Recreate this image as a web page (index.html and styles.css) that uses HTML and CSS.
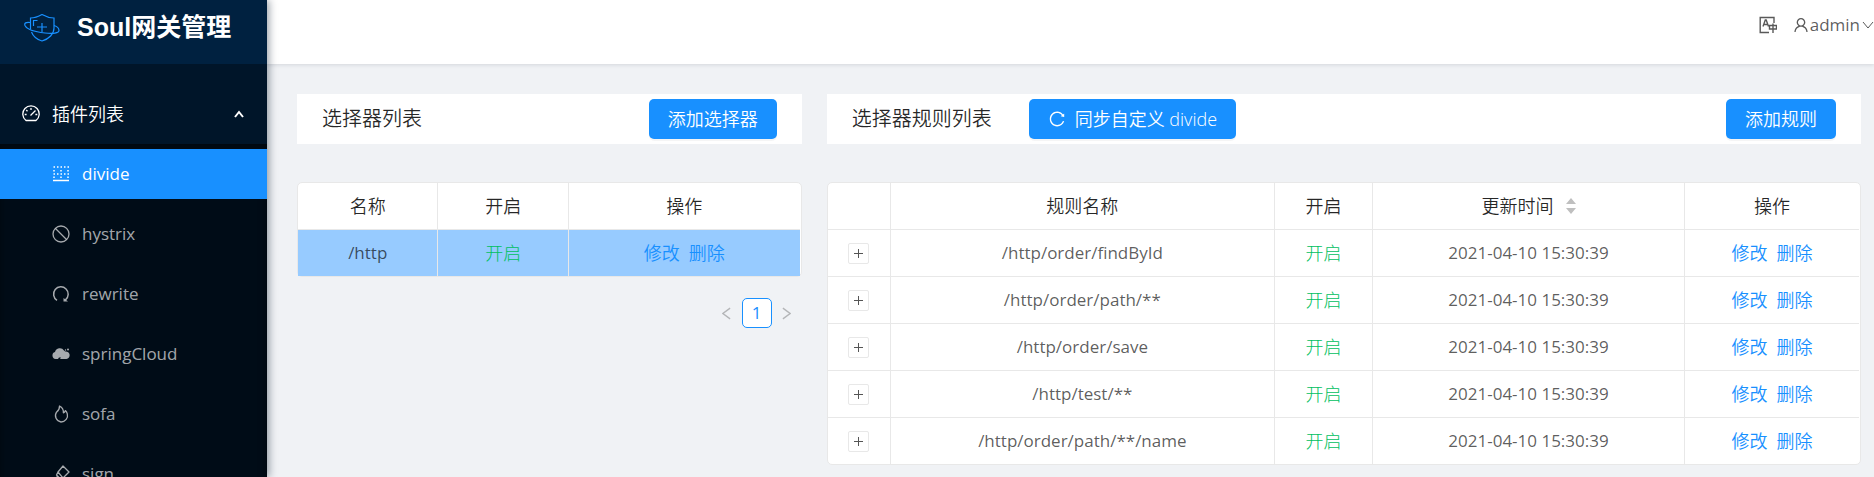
FILE: index.html
```
<!DOCTYPE html>
<html lang="zh-CN">
<head>
  <meta charset="UTF-8" />
  <meta name="viewport" content="width=device-width, initial-scale=1.0"/>
  <title>Soul网关管理</title>
  <link rel="stylesheet" href="styles.css">
</head>
<body>
  <div class="layout">
    <aside class="sidebar">
      <div class="logo">
        <svg class="logo-icon" viewBox="0 0 36 28" fill="none" stroke="#1890ff" stroke-width="1.2">
          <path d="M6.500 15V4c4 0 8-1.500 11.500-3.500C21.500 2.500 26 4 30 4v10c0 6-5 11-12 13-5-1.500-9-5-10.500-9"/>
          <path d="M6 8.500C2 8 0 9 1 11.500c2 4 11 6.500 20 7.500 8 1 14 0 14-2.500 0-2-2-4-5-5"/>
          <path d="M9.500 12V6.500h4M18 9v9M13 13h10"/>
        </svg>
        <h1>Soul网关管理</h1>
      </div>
      <nav class="menu">
        <button class="menu-title" type="button">
          <svg class="icon" viewBox="0 0 18 18" fill="none" stroke="currentColor" stroke-width="1.3">
            <path d="M4 15.500a8.200 8.200 0 1 1 10 0z" stroke-linejoin="round"/>
            <path d="M9 3v2M4.300 5l1.200 1.200M2.700 9.500h1.900M13.400 9.500h1.900M8.500 10.500l5-5"/>
          </svg>
          <span>插件列表</span>
          <svg class="menu-arrow" viewBox="0 0 10 8" fill="none" stroke="currentColor" stroke-width="2">
            <path d="M1 7l4-5 4 5"/>
          </svg>
        </button>
        <ul class="submenu">
          <li><a class="menu-item active" href="#divide">
            <svg class="icon" viewBox="0 0 18 18" fill="none" stroke="currentColor" stroke-width="1.500">
              <path d="M1.500 2h16M1.500 9h16" stroke-dasharray="1.500 2"/>
              <path d="M2 5v1.500M9 5v1.500M16 5v1.500M2 11.500V13M9 11.500V13M16 11.500V13"/>
              <path d="M1 15.500h16"/>
            </svg>divide</a></li>
          <li><a class="menu-item" href="#hystrix">
            <svg class="icon" viewBox="0 0 18 18" fill="none" stroke="currentColor" stroke-width="1.300">
              <circle cx="9" cy="9" r="8"/><path d="M3.500 3.500l11 11"/>
            </svg>hystrix</a></li>
          <li><a class="menu-item" href="#rewrite">
            <svg class="icon" viewBox="0 0 18 18" fill="none" stroke="currentColor" stroke-width="1.500">
              <path d="M5 15.300a7.300 7.300 0 1 1 8.500-.500"/>
              <path d="M11.500 13v3.500h4.500z" fill="currentColor" stroke="none"/>
            </svg>rewrite</a></li>
          <li><a class="menu-item" href="#springCloud">
            <svg class="icon" viewBox="0 0 18 18" fill="currentColor">
              <path d="M3.500 14a3.600 3.600 0 0 1-.500-7 5 5 0 0 1 9-1.500c.800 1 1.500 1 3 1.300A3.700 3.700 0 0 1 14.500 14H8l1-1.500H7L6 14z"/>
              <circle cx="16" cy="4.500" r="1"/><circle cx="13.500" cy="5" r=".7"/>
            </svg>springCloud</a></li>
          <li><a class="menu-item" href="#sofa">
            <svg class="icon" viewBox="0 0 18 18" fill="none" stroke="currentColor" stroke-width="1.300" stroke-linejoin="round">
              <path d="M7.500 1C7.800 4 6.500 5.500 4.500 7.200A6.400 6.400 0 0 0 9 17a6.500 6.500 0 0 0 6.300-8.200c-.4-1.400-1-2.300-2-3.200-.2 1.200-.8 1.900-1.900 2.300C11.600 5 10 2.300 7.500 1z"/>
            </svg>sofa</a></li>
          <li><a class="menu-item" href="#sign">
            <svg class="icon" viewBox="0 0 18 18" fill="none" stroke="currentColor" stroke-width="1.300" stroke-linejoin="round">
              <path d="M11 1l6 6-6 6-5-6zM6 7l-1.500 3L8 13.500l3-.500M5.500 11.500L1 16h5l1.500-2.500"/>
            </svg>sign</a></li>
        </ul>
      </nav>
    </aside>

    <div class="main">
      <header class="topbar">
        <button class="top-button" type="button" aria-label="Language">
          <svg class="icon" viewBox="0 0 18 18" fill="none" stroke="currentColor" stroke-width="1.400">
            <path d="M15 7V1.500H1.200v15H10"/>
            <path d="M4 10.500L6.300 4h.900l2.300 6.500M4.800 8.500h4"/>
            <path d="M10.500 9.500h7v3.500h-7zM14 7.500V17"/>
          </svg>
        </button>
        <button class="top-button user" type="button">
          <svg class="icon" viewBox="0 0 1024 1024" fill="currentColor">
            <path d="M858.500 763.600a374 374 0 00-80.600-119.500 375.630 375.630 0 00-119.500-80.600c-.4-.2-.8-.3-1.200-.5C719.500 518 760 444.700 760 362c0-137-111-248-248-248S264 225 264 362c0 82.700 40.500 156 102.800 201.100-.4.2-.8.3-1.200.5-44.800 18.900-85 46-119.500 80.600a375.630 375.630 0 00-80.600 119.500A371.700 371.700 0 00136 901.800a8 8 0 008 8.200h60c4.400 0 7.900-3.500 8-7.800 2-77.200 33-149.500 87.800-204.300 56.700-56.700 132-87.900 212.200-87.900s155.500 31.200 212.200 87.900C779 752.700 810 825 812 902.200c.1 4.400 3.600 7.800 8 7.800h60a8 8 0 008-8.200c-1-47.800-10.900-94.300-29.500-138.200zM512 534c-45.900 0-89.100-17.900-121.600-50.400S340 407.900 340 362c0-45.900 17.900-89.100 50.400-121.600S466.100 190 512 190s89.100 17.900 121.600 50.400S684 316.100 684 362c0 45.900-17.900 89.100-50.400 121.600S557.900 534 512 534z"/>
          </svg>
          <span>admin</span>
          <svg class="down-arrow" viewBox="0 0 12 8" fill="none" stroke="currentColor">
            <path d="M1 1l5 6 5-6"/>
          </svg>
        </button>
      </header>

      <div class="content">
        <section class="column">
          <div class="panel-header">
            <h2>选择器列表</h2>
            <button class="primary push" type="button">添加选择器</button>
          </div>
          <div class="table-box">
            <table class="selector-table">
              <colgroup><col class="col-name"><col class="col-open"><col></colgroup>
              <thead>
                <tr><th>名称</th><th>开启</th><th>操作</th></tr>
              </thead>
              <tbody>
                <tr class="selected">
                  <td>/http</td>
                  <td class="open">开启</td>
                  <td class="actions"><a href="#edit">修改</a><a href="#delete">删除</a></td>
                </tr>
              </tbody>
            </table>
          </div>
          <div class="pagination">
            <button class="page-step" type="button" aria-label="上一页" disabled>
              <svg viewBox="0 0 10 14" fill="none" stroke="currentColor" stroke-width="1.500"><path d="M9 1L1 7l8 6"/></svg>
            </button>
            <button class="page-number" type="button">1</button>
            <button class="page-step" type="button" aria-label="下一页" disabled>
              <svg viewBox="0 0 10 14" fill="none" stroke="currentColor" stroke-width="1.500"><path d="M1 1l8 6-8 6"/></svg>
            </button>
          </div>
        </section>

        <section class="column">
          <div class="panel-header">
            <h2>选择器规则列表</h2>
            <button class="primary sync" type="button">
              <svg class="icon" viewBox="0 0 1024 1024" fill="currentColor">
                <path d="M909.100 209.300l-56.400 44.100C775.800 155.100 656.200 92 521.900 92 290 92 102.300 279.500 102 511.500 101.700 743.700 289.800 932 521.900 932c181.300 0 335.800-115 394.600-276.100 1.500-4.200-.7-8.900-4.900-10.300l-56.700-19.500a8 8 0 00-10.100 4.800c-1.800 5-3.800 10-5.900 14.900-17.300 41-42.100 77.800-73.700 109.400A344.770 344.770 0 01655.900 829c-42.300 17.900-87.400 27-133.800 27-46.500 0-91.500-9.100-133.800-27A341.500 341.500 0 01279 755.200a342.160 342.160 0 01-73.700-109.400c-17.900-42.400-27-87.400-27-133.900s9.100-91.500 27-133.900c17.300-41 42.100-77.800 73.700-109.400 31.600-31.600 68.400-56.400 109.300-73.800 42.300-17.900 87.400-27 133.800-27 46.500 0 91.500 9.100 133.800 27a341.500 341.500 0 01109.300 73.800c9.900 9.900 19.200 20.400 27.800 31.400l-60.200 47a8 8 0 003 14.100l175.600 43c5 1.200 9.900-2.600 9.900-7.700l.8-180.900c-.1-6.600-7.800-10.300-13-6.200z"/>
              </svg>
              <span>同步自定义 divide</span>
            </button>
            <button class="primary push" type="button">添加规则</button>
          </div>
          <div class="table-box">
            <table class="rule-table">
              <colgroup><col class="col-expand"><col><col class="col-state"><col class="col-time"><col class="col-action"></colgroup>
              <thead>
                <tr>
                  <th></th>
                  <th>规则名称</th>
                  <th>开启</th>
                  <th><span class="sortable">更新时间
                    <svg class="sorter" viewBox="0 0 10 16" fill="#bfbfbf"><path d="M5 0l5 6H0zM0 10h10l-5 6z"/></svg>
                  </span></th>
                  <th>操作</th>
                </tr>
              </thead>
              <tbody>
                <tr>
                  <td><button class="expand" type="button" aria-label="展开"></button></td>
                  <td>/http/order/findById</td>
                  <td class="open">开启</td>
                  <td>2021-04-10 15:30:39</td>
                  <td class="actions"><a href="#edit">修改</a><a href="#delete">删除</a></td>
                </tr>
                <tr>
                  <td><button class="expand" type="button" aria-label="展开"></button></td>
                  <td>/http/order/path/**</td>
                  <td class="open">开启</td>
                  <td>2021-04-10 15:30:39</td>
                  <td class="actions"><a href="#edit">修改</a><a href="#delete">删除</a></td>
                </tr>
                <tr>
                  <td><button class="expand" type="button" aria-label="展开"></button></td>
                  <td>/http/order/save</td>
                  <td class="open">开启</td>
                  <td>2021-04-10 15:30:39</td>
                  <td class="actions"><a href="#edit">修改</a><a href="#delete">删除</a></td>
                </tr>
                <tr>
                  <td><button class="expand" type="button" aria-label="展开"></button></td>
                  <td>/http/test/**</td>
                  <td class="open">开启</td>
                  <td>2021-04-10 15:30:39</td>
                  <td class="actions"><a href="#edit">修改</a><a href="#delete">删除</a></td>
                </tr>
                <tr>
                  <td><button class="expand" type="button" aria-label="展开"></button></td>
                  <td>/http/order/path/**/name</td>
                  <td class="open">开启</td>
                  <td>2021-04-10 15:30:39</td>
                  <td class="actions"><a href="#edit">修改</a><a href="#delete">删除</a></td>
                </tr>
              </tbody>
            </table>
          </div>
        </section>
      </div>
    </div>
  </div>
</body>
</html>
```
FILE: styles.css
```
* {
  box-sizing: border-box;
}
body {
  margin: 0;
  font-family: "Open Sans", "Noto Sans CJK SC", sans-serif;
  font-size: 17px;
  font-weight: 400;
  line-height: 26px;
  color: rgba(0, 0, 0, 0.65);
  background-color: #f0f2f5;
}
h1, h2, ul {
  margin: 0;
  padding: 0;
}
button {
  font: inherit;
  color: inherit;
  padding: 0;
  border: none;
  background: none;
  cursor: pointer;
}
a {
  color: #1890ff;
  text-decoration: none;
}
svg {
  display: block;
  flex: none;
}
.icon {
  width: 18px;
  height: 18px;
}
.layout {
  display: flex;
  height: 100vh;
  overflow: hidden;
}

/* sidebar */
.sidebar {
  position: relative;
  z-index: 1;
  flex: none;
  width: 267px;
  background-color: #001529;
  box-shadow: 2px 0 8px rgba(0, 21, 41, 0.4);
}
.logo {
  display: flex;
  gap: 17px;
  height: 64px;
  padding: 10px 24px;
  background-color: #002140;
}
.logo-icon {
  width: 36px;
  height: 28px;
  margin-top: 4px;
}
.logo h1 {
  font-family: "Liberation Sans", "Noto Sans CJK SC", sans-serif;
  font-size: 25px;
  font-weight: 700;
  line-height: 34px;
  color: #fff;
}
.menu {
  padding-top: 20px;
}
.menu-title {
  display: flex;
  align-items: center;
  gap: 12px;
  width: 100%;
  height: 60px;
  padding: 0 23px 0 22px;
  font-size: 18px;
  font-weight: 350;
  color: #fff;
}
.menu-arrow {
  width: 10px;
  height: 8px;
  margin-left: auto;
}
.submenu {
  padding-top: 5px;
  list-style: none;
  background-color: #000c17;
  box-shadow: inset 0 2px 8px rgba(0, 0, 0, 0.45);
}
.menu-item {
  display: flex;
  align-items: center;
  gap: 12px;
  height: 50px;
  margin-bottom: 10px;
  padding-left: 52px;
  color: rgba(255, 255, 255, 0.65);
}
.menu-item.active {
  color: #fff;
  background-color: #1890ff;
}

/* top bar */
.main {
  flex: 1;
  min-width: 0;
}
.topbar {
  display: flex;
  justify-content: flex-end;
  gap: 15px;
  height: 64px;
  padding-bottom: 15px;
  background-color: #fff;
  box-shadow: 0 1px 4px rgba(0, 21, 41, 0.12);
}
.top-button {
  display: flex;
  align-items: center;
}
.down-arrow {
  width: 12px;
  height: 8px;
  margin-left: 2px;
}

/* content */
.content {
  display: grid;
  grid-template-columns: 1fr 2fr;
  padding: 30px 0 0 18px;
}
.column {
  min-width: 0;
  padding: 0 13px 0 12px;
}
.panel-header {
  display: flex;
  align-items: center;
  height: 50px;
  margin-bottom: 38px;
  padding: 0 25px;
  background-color: #fff;
}
.panel-header h2 {
  font-size: 20px;
  font-weight: 350;
  color: rgba(0, 0, 0, 0.85);
}
.primary {
  height: 40px;
  padding: 0 19px;
  border-radius: 5px;
  font-size: 18px;
  font-weight: 350;
  color: #fff;
  background-color: #1890ff;
  box-shadow: 0 2px 0 rgba(0, 0, 0, 0.04);
}
.push {
  margin-left: auto;
}
.sync {
  display: flex;
  align-items: center;
  gap: 9px;
  margin-left: 37px;
}
.table-box {
  padding-right: 1px;
  border: 1px solid #e8e8e8;
  border-radius: 5px;
  background-color: #fff;
}
table {
  width: 100%;
  table-layout: fixed;
  border-collapse: separate;
  border-spacing: 0;
}
th, td {
  height: 47px;
  padding: 0;
  text-align: center;
  border-right: 1px solid #e8e8e8;
  border-bottom: 1px solid #e8e8e8;
}
th {
  font-size: 18px;
  font-weight: 350;
  color: rgba(0, 0, 0, 0.85);
}
th:last-child, td:last-child {
  border-right: none;
}
tbody tr:last-child td {
  height: 46px;
  border-bottom: none;
}
.col-name {
  width: 28%;
}
.col-open {
  width: 26%;
}
.col-expand {
  width: 63px;
}
.col-state {
  width: 98px;
}
.col-time {
  width: 312px;
}
.col-action {
  width: 174px;
}
.selected {
  background-color: #97cbff;
}
.open {
  font-size: 18px;
  font-weight: 300;
  color: #00c060;
}
.actions {
  font-size: 18px;
  font-weight: 350;
}
.actions a + a {
  margin-left: 9px;
}
.sortable {
  display: inline-flex;
  align-items: center;
  gap: 12px;
}
.sorter {
  width: 10px;
  height: 16px;
}
.expand {
  display: block;
  width: 21px;
  height: 21px;
  margin: 0 auto;
  border: 1px solid #e8e8e8;
  border-radius: 2px;
  background:
    linear-gradient(#555, #555) center / 9px 1px no-repeat,
    linear-gradient(#555, #555) center / 1px 9px no-repeat,
    #fff;
}
.pagination {
  display: flex;
  justify-content: flex-end;
  padding-top: 21px;
}
.page-number, .page-step {
  display: flex;
  align-items: center;
  justify-content: center;
  width: 30px;
  height: 30px;
}
.page-number {
  border: 1px solid #1890ff;
  border-radius: 5px;
  color: #1890ff;
  background-color: #fff;
}
.page-step {
  color: rgba(0, 0, 0, 0.25);
}
.page-step svg {
  width: 9px;
  height: 13px;
}
```
